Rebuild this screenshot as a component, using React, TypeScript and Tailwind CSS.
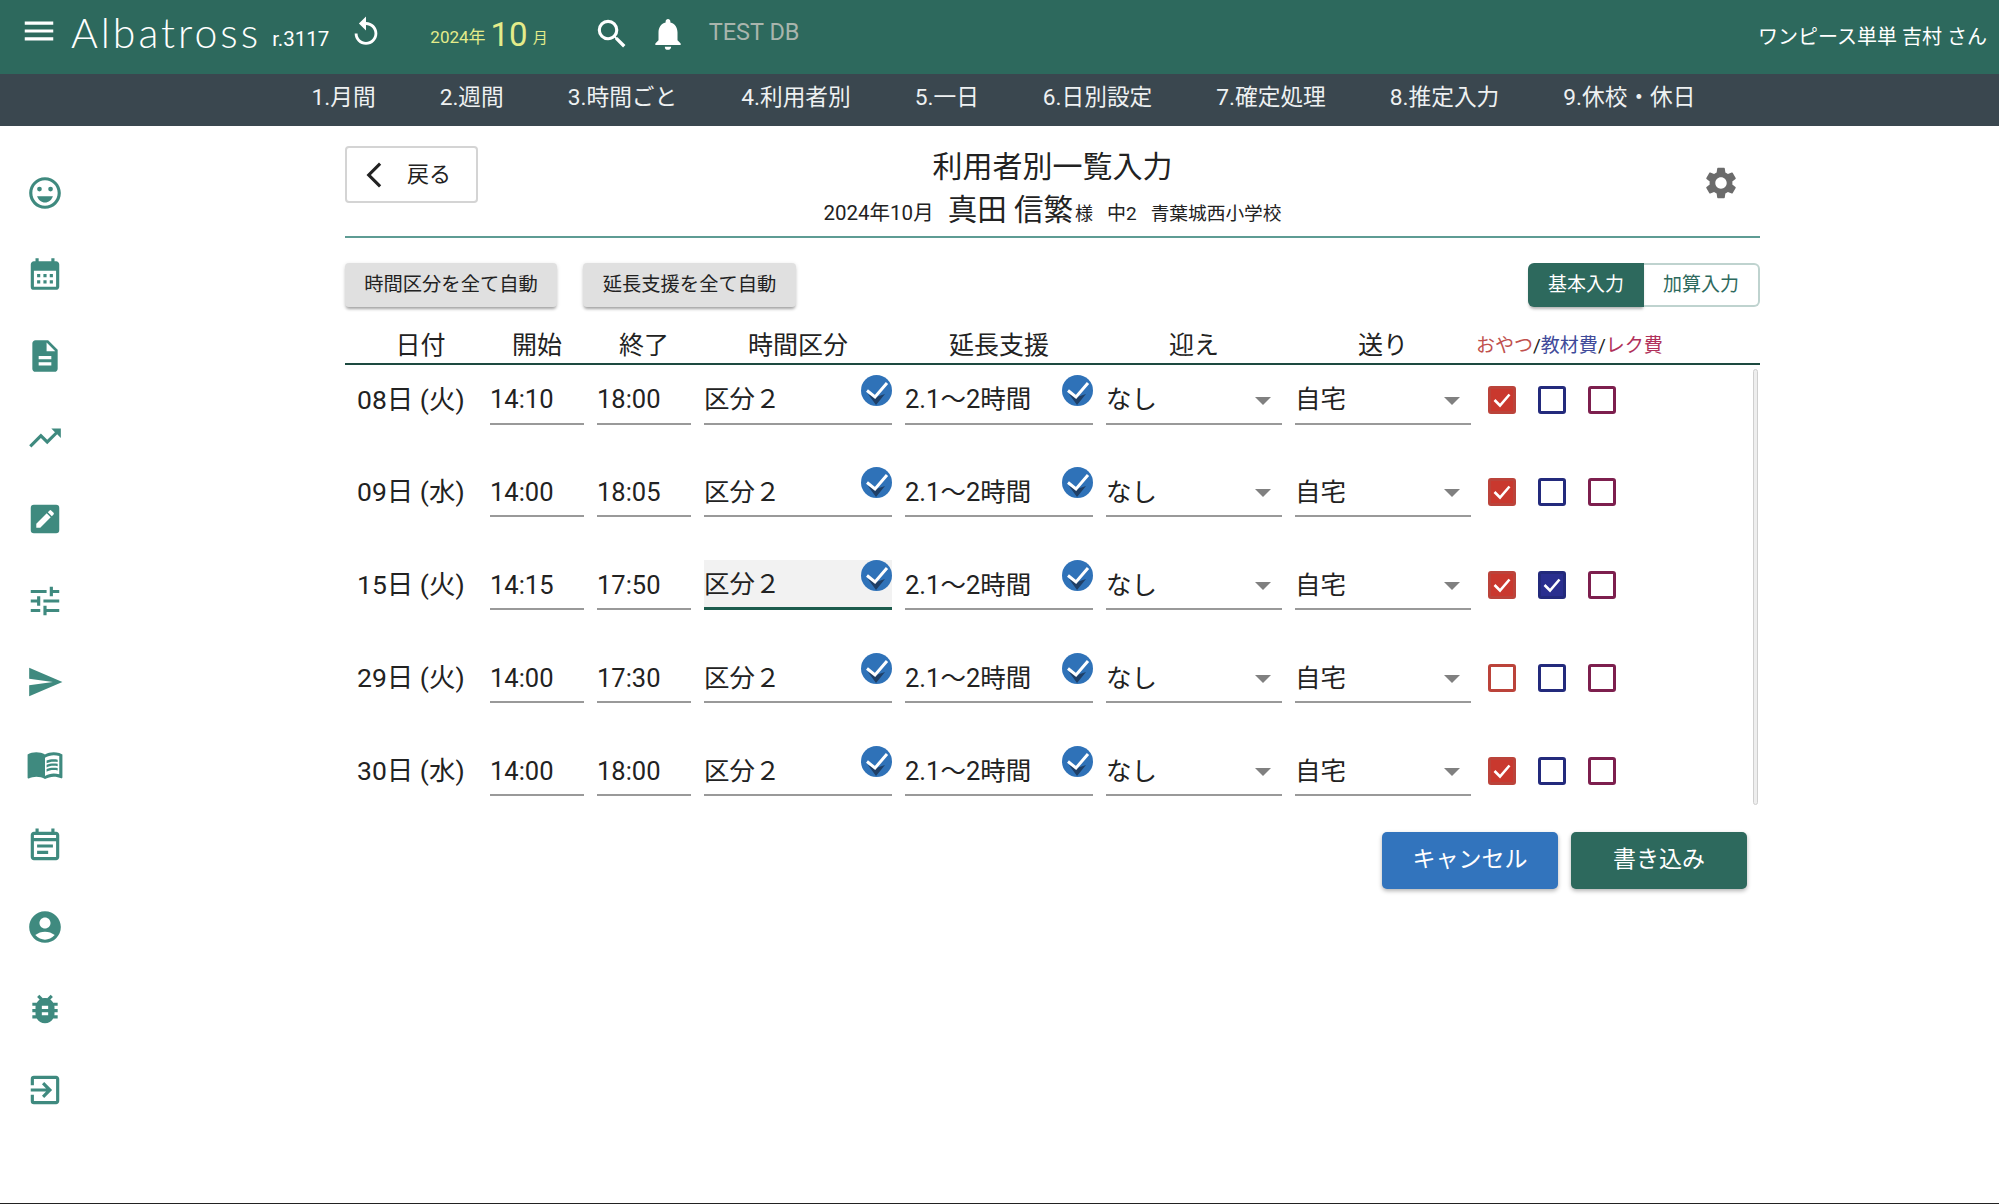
import {
  MdAccountCircle,
  MdArrowBackIosNew,
  MdBugReport,
  MdCalendarMonth,
  MdDescription,
  MdExitToApp,
  MdMenu,
  MdMenuBook,
  MdNotifications,
  MdOutlineEmojiEmotions,
  MdOutlineEventNote,
  MdReplay,
  MdSearch,
  MdSend,
  MdSettings,
  MdTrendingUp,
  MdTune,
} from "react-icons/md";

const navItems = ["1.月間", "2.週間", "3.時間ごと", "4.利用者別", "5.一日", "6.日別設定", "7.確定処理", "8.推定入力", "9.休校・休日"];

function EditBox({ className }: { className?: string }) {
  return (
    <svg viewBox="0 0 24 24" width="1em" height="1em" className={className}>
      <rect x="3" y="3" width="18" height="18" rx="2" fill="currentColor" />
      <path
        d="M6.5 15v2.5H9l6.6-6.6-2.5-2.5L6.5 15zM17.4 9.1a.7.7 0 0 0 0-1l-1.5-1.5a.7.7 0 0 0-1 0l-1.1 1.1 2.5 2.5 1.1-1.1z"
        fill="#fff"
      />
    </svg>
  );
}

const sideIcons = [
  MdOutlineEmojiEmotions,
  MdCalendarMonth,
  MdDescription,
  MdTrendingUp,
  EditBox,
  MdTune,
  MdSend,
  MdMenuBook,
  MdOutlineEventNote,
  MdAccountCircle,
  MdBugReport,
  MdExitToApp,
];

const rows = [
  { date: "08日 (火)", start: "14:10", end: "18:00", checks: [true, false, false] },
  { date: "09日 (水)", start: "14:00", end: "18:05", checks: [true, false, false] },
  { date: "15日 (火)", start: "14:15", end: "17:50", checks: [true, true, false], focus: true },
  { date: "29日 (火)", start: "14:00", end: "17:30", checks: [false, false, false] },
  { date: "30日 (水)", start: "14:00", end: "18:00", checks: [true, false, false] },
];

const cols = "grid grid-cols-[132px_94px_94px_188px_188px_176px_176px_1fr] gap-x-[13px]";

function AutoBadge() {
  return (
    <svg viewBox="0 0 31 31" className="absolute right-0 top-0 h-[31px] w-[31px]">
      <circle cx="15.5" cy="15.5" r="15.5" fill="#2f72b8" />
      <polygon points="7,19 15,30 24,19 15,22" fill="#1f3f66" />
      <path d="M6 15.5 L14 22 L26 8" fill="none" stroke="#fff" strokeWidth="3" />
    </svg>
  );
}

function Field({ text, auto, focus }: { text: string; auto?: boolean; focus?: boolean }) {
  return (
    <div className={focus ? "relative flex h-[50px] items-center border-b-[3px] border-[#1d5c4d] bg-[#f2f2f2] pt-[2px]" : "relative flex h-[50px] items-center border-b-2 border-[#999] pt-[2px]"}>
      {text}
      {auto && <AutoBadge />}
    </div>
  );
}

function Select({ text }: { text: string }) {
  return (
    <div className="relative flex h-[50px] items-center border-b-2 border-[#999] pt-[2px]">
      {text}
      <span className="absolute right-[11px] top-[22px] h-0 w-0 border-x-[8px] border-t-[8px] border-x-transparent border-t-[#808080]" />
    </div>
  );
}

function Check({ on, fill, edge }: { on: boolean; fill: string; edge: string }) {
  return (
    <span className={`flex h-[28px] w-[28px] items-center justify-center rounded-[3px] border-[3px] ${on ? fill : "bg-white"} ${edge}`}>
      {on && (
        <svg viewBox="0 0 22 22" className="h-[22px] w-[22px]">
          <path d="M3.5 11 L9 16.5 L18.5 5.5" fill="none" stroke="#fff" strokeWidth="2.6" />
        </svg>
      )}
    </span>
  );
}

export default function App() {
  return (
    <div className="flex min-h-screen flex-col border-b border-[#222] bg-white font-['Roboto','Noto_Sans_CJK_JP',sans-serif] text-[#222]">
      <header className="flex h-[74px] items-center bg-[#2d695d] pb-[6px] text-white">
        <MdMenu className="ml-[20px] mt-[-6px] text-[38px]" />
        <span className="ml-[13px] mt-[-4px] font-['Lato',sans-serif] text-[41px] font-light leading-none tracking-[3px]">Albatross</span>
        <span className="ml-[11px] mt-[10px] text-[20.5px]">r.3117</span>
        <MdReplay className="ml-[20px] mt-[-4px] text-[34px]" />
        <span className="ml-[47px] mt-[8px] text-[17px] text-[#e4ec8a]">2024年</span>
        <span className="ml-[5px] text-[33px] leading-none text-[#e4ec8a]">10</span>
        <span className="ml-[5px] mt-[8px] text-[15px] text-[#e4ec8a]">月</span>
        <MdSearch className="ml-[45px] text-[38px]" />
        <MdNotifications className="ml-[18px] text-[38px]" />
        <span className="ml-[22px] mt-[-2px] text-[23.5px] text-[#a9b5ad]">TEST DB</span>
        <span className="ml-auto mr-[12px] mt-[6px] text-[20px]">ワンピース単単 吉村 さん</span>
      </header>

      <nav className="flex h-[52px] items-center justify-center gap-[64px] bg-[#3a474f] pb-[3px] pl-[8px] text-[22.7px] text-[#eef1f2]">
        {navItems.map((item) => (
          <span key={item}>{item}</span>
        ))}
      </nav>

      <div className="flex flex-1">
        <aside className="flex w-[90px] flex-col items-center pt-[26px]">
          {sideIcons.map((Icon, i) => (
            <div key={i} className="flex h-[81.6px] items-center justify-center">
              <Icon className="text-[38px] text-[#3f8a7f]" />
            </div>
          ))}
        </aside>

        <main className="ml-[255px] w-[1415px]">
          <div className="grid h-[112px] grid-cols-[1fr_auto_1fr] items-start border-b-2 border-[#5e9c94] pt-[20px]">
            <button className="flex h-[57px] w-[133px] items-center rounded-[4px] border-2 border-[#d4d4d4] pl-[12px] text-[22px]">
              <MdArrowBackIosNew className="text-[30px]" />
              <span className="ml-[18px]">戻る</span>
            </button>
            <div className="flex flex-col items-center">
              <h1 className="text-[30px] font-normal leading-[42px]">利用者別一覧入力</h1>
              <p className="mt-[3px] flex items-baseline text-[20.5px] leading-[38px]">
                <span>2024年10月</span>
                <span className="ml-[14px] text-[29.5px]">真田 信繁</span>
                <span className="ml-[2px] text-[18px]">様</span>
                <span className="ml-[14px] text-[19px]">中2</span>
                <span className="ml-[14px] text-[18.7px]">青葉城西小学校</span>
              </p>
            </div>
            <div className="flex justify-end pr-[20px] pt-[18px]">
              <MdSettings className="text-[38px] text-[#6b6b6b]" />
            </div>
          </div>

          <div className="mt-[25px] flex items-center">
            <button className="h-[44px] w-[212px] rounded-[4px] bg-[#e0e0e0] text-[19.3px] shadow-[0_3px_3px_-1px_rgba(0,0,0,0.3),0_1px_4px_rgba(0,0,0,0.12)]">時間区分を全て自動</button>
            <button className="ml-[26px] h-[44px] w-[213px] rounded-[4px] bg-[#e0e0e0] text-[19.3px] shadow-[0_3px_3px_-1px_rgba(0,0,0,0.3),0_1px_4px_rgba(0,0,0,0.12)]">延長支援を全て自動</button>
            <div className="ml-auto flex h-[44px] w-[232px] text-[19px]">
              <span className="flex w-[116px] items-center justify-center rounded-l-[6px] bg-[#2d695d] text-white shadow-[0_3px_3px_-1px_rgba(0,0,0,0.3)]">基本入力</span>
              <span className="flex w-[116px] items-center justify-center rounded-r-[6px] border-2 border-l-0 border-[#bfd3cf] text-[#2d695d]">加算入力</span>
            </div>
          </div>

          <div className={`${cols} mt-[18px] h-[40px] items-center border-b-2 border-[#1d4a40] pt-[2px] text-center text-[25px]`}>
            <span className="pl-[19px]">日付</span>
            <span>開始</span>
            <span>終了</span>
            <span>時間区分</span>
            <span>延長支援</span>
            <span>迎え</span>
            <span>送り</span>
            <span className="ml-[-8px] whitespace-nowrap text-left text-[19px] text-[#222]">
              <span className="text-[#c0504d]">おやつ</span>/<span className="text-[#3f4a9a]">教材費</span>/<span className="text-[#b0305a]">レク費</span>
            </span>
          </div>

          <div className="relative flex h-[439px] flex-col gap-[42.8px] pt-[9.5px] text-[25.5px]">
            {rows.map((row) => (
              <div key={row.date} className={`${cols} items-center`}>
                <span className="pl-[12px] text-[26.5px]">{row.date}</span>
                <Field text={row.start} />
                <Field text={row.end} />
                <Field text="区分２" auto focus={row.focus} />
                <Field text="2.1〜2時間" auto />
                <Select text="なし" />
                <Select text="自宅" />
                <div className="flex gap-[22px] pl-[4px]">
                  <Check on={row.checks[0]} fill="bg-[#c9382e]" edge="border-[#bb433a]" />
                  <Check on={row.checks[1]} fill="bg-[#2a2f8f]" edge="border-[#232a7c]" />
                  <Check on={row.checks[2]} fill="bg-[#7d1f4e]" edge="border-[#7d1f4e]" />
                </div>
              </div>
            ))}
            <span className="absolute right-[2px] top-[4px] h-[436px] w-[5px] rounded-full border border-[#cfcfcf] bg-[#eee]" />
          </div>

          <div className="mt-[28px] flex justify-end gap-[13px] pr-[13px] text-[23px] text-white">
            <button className="h-[57px] w-[176px] rounded-[5px] bg-[#3274bd] shadow-[0_2px_4px_rgba(0,0,0,0.3)]">キャンセル</button>
            <button className="h-[57px] w-[176px] rounded-[5px] bg-[#2d695d] shadow-[0_2px_4px_rgba(0,0,0,0.3)]">書き込み</button>
          </div>
        </main>
      </div>
    </div>
  );
}
